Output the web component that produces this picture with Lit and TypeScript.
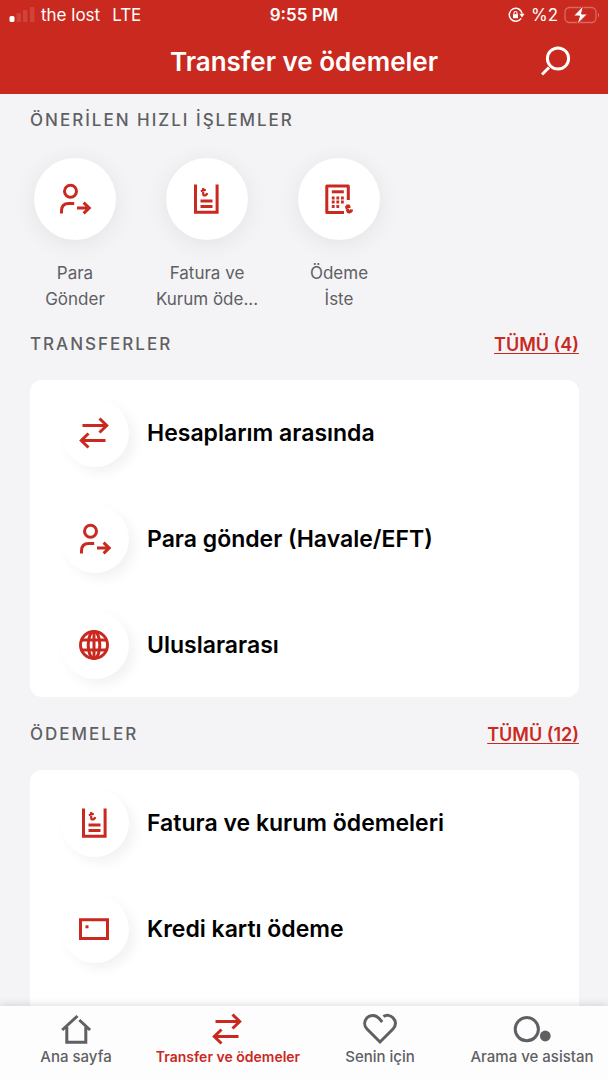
import { LitElement, html, css, svg } from "lit";
import { customElement, property } from "lit/decorators.js";

const lira = svg`<path d="M2.4 0v6q0 1.5 1.5 1.4Q6 7.2 6.4 5M0 3.2 5 1.8" />`;

const icons: Record<string, unknown> = {
  send: svg`<circle cx="11.5" cy="8.2" r="6" /><path d="M2.5 30.5v-2.7q0-7.3 7.3-7.3h5.4M18 25h12M24.6 19.6l5.6 5.4-5.6 5.4" />`,
  bill: svg`<path d="M4.5 1.5v27.8h21.6V1.5M9.5 18h12M9.5 23.6h12" /><g transform="translate(9.8 5)" stroke-width="2.2">${lira}</g>`,
  request: svg`<path d="M25.3 17V3H3.8v26.5h17.2" stroke-linejoin="round" /><path d="M8.8 8.8h12" /><path d="M8.8 15h12.4M8.8 19h12.4M8.8 23.5h8" stroke-dasharray="2.8 1.8" /><g transform="translate(22.3 21.5)" stroke-width="3">${lira}</g>`,
  swap: svg`<path d="M3.5 8.5h24M20.5 1.5l7.2 7-7.2 7M26.5 23.5h-24M9.5 16.5l-7.2 7 7.2 7" />`,
  globe: svg`<circle cx="15" cy="16" r="13.5" /><ellipse cx="15" cy="16" rx="5.8" ry="13.5" /><path d="M2.5 11h25M2.5 21h25M15 2.5v27" />`,
  card: svg`<path d="M1.5 6.8h27v18.6h-27z" /><path d="M6.5 13.8h3" />`,
  home: svg`<path d="M17.5 3 2.2 17M19.3 7l10.8 10M6.8 14v15.2h19V14" />`,
  heart: svg`<path d="M18.2 9 15.2 5.6C11.8 1.6 6 1.4 3 4.8S-.2 12.7 3 16L16 29 29 16C32.2 12.7 32.4 8 29 4.8 26.4 2 22.4 1.6 19.4 3.6" />`,
  assistant: svg`<circle cx="10.8" cy="16.2" r="11.6" /><circle cx="29.3" cy="23" r="5.4" fill="currentColor" stroke="none" />`,
  search: svg`<circle cx="18" cy="12.5" r="10.6" /><path d="M9 21.5 2 28.5" />`,
};

@customElement("line-icon")
class LineIcon extends LitElement {
  @property() name = "";

  static styles = css`
    :host {
      display: block;
      width: 32px;
      height: 32px;
    }
    svg {
      display: block;
      overflow: visible;
      fill: none;
      stroke: currentColor;
      stroke-width: 3;
    }
  `;

  render() {
    return html`<svg viewBox="0 0 32 32" width="32" height="32" aria-hidden="true">${icons[this.name]}</svg>`;
  }
}

@customElement("status-bar")
class StatusBar extends LitElement {
  static styles = css`
    :host {
      display: grid;
      grid-template-columns: 1fr auto 1fr;
      align-items: center;
      height: 30px;
      padding: 0 8px;
      font-size: 17px;
    }
    .side {
      display: flex;
      align-items: center;
      gap: 6px;
    }
    .right {
      justify-content: flex-end;
    }
    .network {
      margin-left: 6px;
    }
    .time {
      font-weight: 600;
    }
  `;

  render() {
    return html`
      <div class="side">
        <svg width="27" height="16" viewBox="0 0 27 16" fill="#fff" aria-hidden="true">
          <rect x="1.5" y="9" width="5" height="6" rx="1.5" />
          <g opacity=".12">
            <rect x="8.5" y="6" width="4.5" height="9" rx="1" />
            <rect x="15" y="3" width="4.5" height="12" rx="1" />
            <rect x="22" y="0" width="4.5" height="15" rx="1" />
          </g>
        </svg>
        <span>the lost</span>
        <span class="network">LTE</span>
      </div>
      <span class="time">9:55 PM</span>
      <div class="side right">
        <svg width="17" height="16" viewBox="0 0 17 16" fill="none" stroke="#fff" stroke-width="1.5" aria-hidden="true">
          <path d="M13.2 11.4A6.5 6.5 0 1 1 14.2 6.6" />
          <path d="M11.4 6.8h5.2L14 10.4z" fill="#fff" stroke="none" />
          <path d="M5 7.2h5v4H5z" fill="#fff" stroke="none" />
          <path d="M6 7.5V6q0-1.5 1.5-1.5T9 6v1.5" stroke-width="1.1" />
        </svg>
        <span>%2</span>
        <svg width="36" height="18" viewBox="0 0 36 18" fill="none" aria-hidden="true">
          <rect x="1" y="1.5" width="31" height="15" rx="4.5" stroke="#fff" stroke-opacity=".3" stroke-width="1.3" />
          <path d="M34 6.5q2 2.5 0 5z" fill="#fff" fill-opacity=".4" />
          <path d="M19.5-.5 9.5 10h6l-2.5 8.5L23.5 8h-6z" fill="#fff" stroke="#c9291e" stroke-width="1" />
        </svg>
      </div>
    `;
  }
}

interface Item {
  icon: string;
  label: string;
}

@customElement("menu-section")
class MenuSection extends LitElement {
  @property() heading = "";
  @property() link = "";
  @property({ attribute: false }) items: Item[] = [];

  static styles = css`
    :host {
      display: flex;
      flex-direction: column;
    }
    .top {
      display: flex;
      align-items: center;
      justify-content: space-between;
      height: 24px;
      margin-bottom: 24px;
    }
    .heading {
      margin: 0;
      font-size: 17px;
      font-weight: 500;
      letter-spacing: 2px;
      color: #5f6063;
    }
    .all {
      font-size: 18px;
      font-weight: 600;
      color: #c9291e;
      text-underline-offset: 2px;
      text-decoration-thickness: 1px;
    }
    .list {
      display: flex;
      flex: 1;
      flex-direction: column;
      gap: 1px;
      border-radius: 12px;
      background: #fff;
    }
    :host(.last) .list {
      border-radius: 12px 12px 0 0;
    }
    .row {
      display: flex;
      align-items: center;
      gap: 18px;
      height: 105px;
      padding: 0 31px;
      border: 0;
      background: none;
      font: 600 23px/28px Inter, "Noto Sans", sans-serif;
      color: #000;
      text-align: left;
    }
    .disc {
      display: grid;
      place-items: center;
      flex: none;
      width: 68px;
      height: 68px;
      border-radius: 50%;
      background: #fff;
      box-shadow: 6px 6px 12px rgb(0 0 0 / 5%);
      color: #c9291e;
    }
  `;

  render() {
    return html`
      <div class="top">
        <h2 class="heading">${this.heading}</h2>
        <a class="all" href="#">${this.link}</a>
      </div>
      <div class="list">
        ${this.items.map(
          (item) => html`<button class="row">
            <span class="disc"><line-icon name=${item.icon}></line-icon></span>${item.label}
          </button>`,
        )}
      </div>
    `;
  }
}

@customElement("app-root")
class AppRoot extends LitElement {
  private quick = [
    { icon: "send", lines: ["Para", "Gönder"] },
    { icon: "bill", lines: ["Fatura ve", "Kurum öde..."] },
    { icon: "request", lines: ["Ödeme", "İste"] },
  ];

  private transfers: Item[] = [
    { icon: "swap", label: "Hesaplarım arasında" },
    { icon: "send", label: "Para gönder (Havale/EFT)" },
    { icon: "globe", label: "Uluslararası" },
  ];

  private payments: Item[] = [
    { icon: "bill", label: "Fatura ve kurum ödemeleri" },
    { icon: "card", label: "Kredi kartı ödeme" },
  ];

  private tabs = [
    { icon: "home", label: "Ana sayfa", active: false },
    { icon: "swap", label: "Transfer ve ödemeler", active: true },
    { icon: "heart", label: "Senin için", active: false },
    { icon: "assistant", label: "Arama ve asistan", active: false },
  ];

  static styles = css`
    :host {
      display: flex;
      flex-direction: column;
      height: 100vh;
      background: #f4f4f7;
      font-family: Inter, "Noto Sans", sans-serif;
      color: #5f6063;
    }
    .header {
      flex: none;
      background: #c9291e;
      color: #fff;
    }
    .bar {
      display: grid;
      grid-template-columns: 1fr auto 1fr;
      align-items: center;
      height: 64px;
      padding: 0 36px;
    }
    .title {
      grid-column: 2;
      margin: 0;
      font-size: 26px;
      font-weight: 600;
      line-height: 30px;
    }
    .search {
      justify-self: end;
      padding: 0;
      border: 0;
      background: none;
      color: inherit;
    }
    .content {
      display: flex;
      flex: 1;
      flex-direction: column;
      min-height: 0;
      padding: 14px 29px 0 30px;
      overflow-y: auto;
      scrollbar-width: none;
    }
    .heading {
      margin: 0;
      font-size: 17px;
      font-weight: 500;
      line-height: 24px;
      letter-spacing: 2px;
    }
    .quick {
      display: flex;
      gap: 12px;
      margin: 26px 0 20px -15px;
    }
    .action {
      display: flex;
      flex-direction: column;
      align-items: center;
      gap: 20px;
      width: 120px;
      padding: 0;
      border: 0;
      background: none;
      font: 400 17px/26px Inter, "Noto Sans", sans-serif;
      color: inherit;
      white-space: nowrap;
    }
    .disc {
      display: grid;
      place-items: center;
      width: 82px;
      height: 82px;
      border-radius: 50%;
      background: #fff;
      box-shadow: 0 4px 24px rgb(0 0 0 / 7%);
      color: #c9291e;
    }
    .section {
      flex: none;
      margin-bottom: 25px;
    }
    .section.last {
      flex: 1 0 auto;
      margin-bottom: 0;
    }
    .tabs {
      display: grid;
      grid-template-columns: repeat(4, 1fr);
      flex: none;
      height: 74px;
      background: #fdfdfe;
      box-shadow: 0 -1px 8px rgb(0 0 0 / 14%);
      z-index: 1;
    }
    .tab {
      display: flex;
      flex-direction: column;
      align-items: center;
      gap: 2px;
      padding-top: 7px;
      font-size: 15px;
      font-weight: 500;
      line-height: 20px;
      color: #5f6063;
      text-decoration: none;
      white-space: nowrap;
    }
    .tab.active {
      color: #c9291e;
      font-size: 14px;
      font-weight: 600;
    }
  `;

  render() {
    return html`
      <header class="header">
        <status-bar></status-bar>
        <div class="bar">
          <h1 class="title">Transfer ve ödemeler</h1>
          <button class="search" aria-label="Ara"><line-icon name="search"></line-icon></button>
        </div>
      </header>
      <main class="content">
        <h2 class="heading">ÖNERİLEN HIZLI İŞLEMLER</h2>
        <div class="quick">
          ${this.quick.map(
            (action) => html`<button class="action">
              <span class="disc"><line-icon name=${action.icon}></line-icon></span>
              <span>${action.lines[0]}<br />${action.lines[1]}</span>
            </button>`,
          )}
        </div>
        <menu-section class="section" heading="TRANSFERLER" link="TÜMÜ (4)" .items=${this.transfers}></menu-section>
        <menu-section class="section last" heading="ÖDEMELER" link="TÜMÜ (12)" .items=${this.payments}></menu-section>
      </main>
      <nav class="tabs">
        ${this.tabs.map(
          (tab) => html`<a class="tab ${tab.active ? "active" : ""}" href="#">
            <line-icon name=${tab.icon}></line-icon>${tab.label}
          </a>`,
        )}
      </nav>
    `;
  }
}
